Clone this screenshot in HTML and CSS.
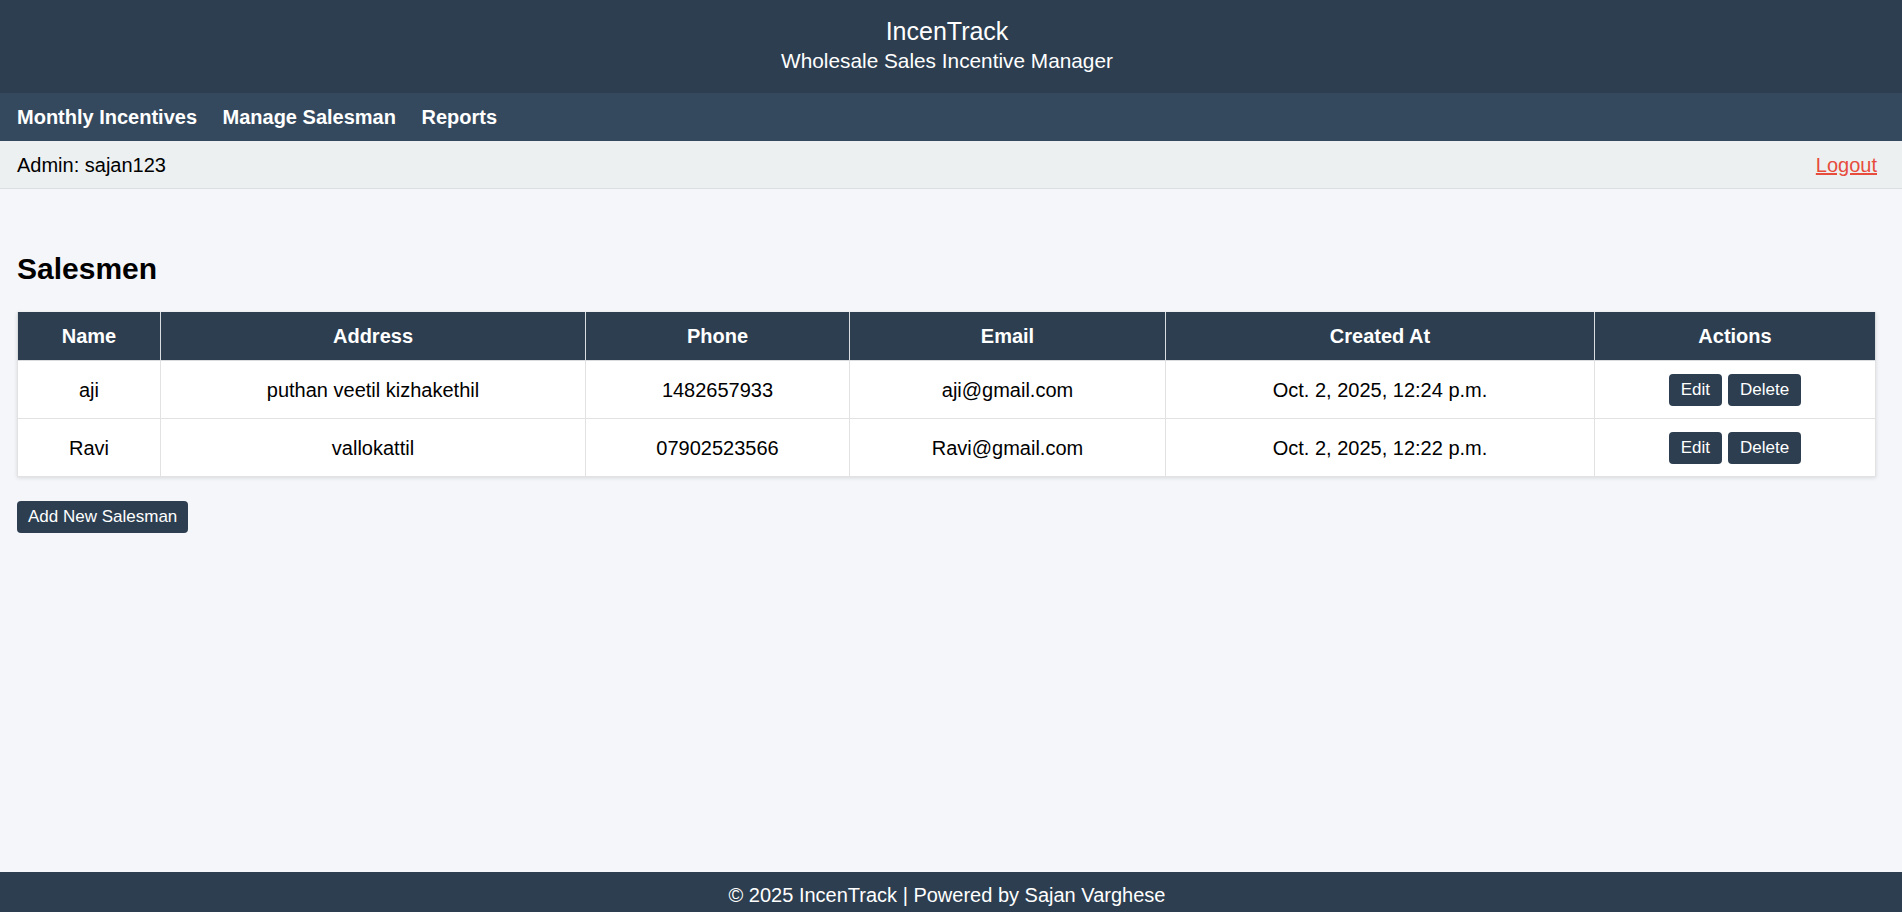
FILE: index.html
```html
<!DOCTYPE html>
<html lang="en">
<head>
<meta charset="utf-8">
<title>IncenTrack - Salesmen</title>
<link rel="stylesheet" href="styles.css">
</head>
<body>
<header class="site-header">
  <div class="brand">IncenTrack</div>
  <div class="tagline">Wholesale Sales Incentive Manager</div>
</header>
<nav class="main-nav">
  <a href="#">Monthly Incentives</a>
  <a href="#">Manage Salesman</a>
  <a href="#">Reports</a>
</nav>
<div class="admin-bar">
  <span class="admin-name">Admin: sajan123</span>
  <a href="#" class="logout">Logout</a>
</div>
<main class="content">
  <h2 class="page-title">Salesmen</h2>
  <table class="data-table">
    <colgroup>
      <col class="c-name">
      <col class="c-address">
      <col class="c-phone">
      <col class="c-email">
      <col class="c-created">
      <col class="c-actions">
    </colgroup>
    <thead>
      <tr>
        <th>Name</th>
        <th>Address</th>
        <th>Phone</th>
        <th>Email</th>
        <th>Created At</th>
        <th>Actions</th>
      </tr>
    </thead>
    <tbody>
      <tr>
        <td>aji</td>
        <td>puthan veetil kizhakethil</td>
        <td>1482657933</td>
        <td>aji@gmail.com</td>
        <td>Oct. 2, 2025, 12:24 p.m.</td>
        <td><div class="actions"><button class="btn-sm">Edit</button><button class="btn-sm">Delete</button></div></td>
      </tr>
      <tr>
        <td>Ravi</td>
        <td>vallokattil</td>
        <td>07902523566</td>
        <td>Ravi@gmail.com</td>
        <td>Oct. 2, 2025, 12:22 p.m.</td>
        <td><div class="actions"><button class="btn-sm">Edit</button><button class="btn-sm">Delete</button></div></td>
      </tr>
    </tbody>
  </table>
  <button class="btn-add">Add New Salesman</button>
</main>
<footer class="site-footer">© 2025 IncenTrack | Powered by Sajan Varghese</footer>
</body>
</html>
```
FILE: styles.css
```css
* { box-sizing: border-box; }

body {
  margin: 0;
  min-height: 100vh;
  display: flex;
  flex-direction: column;
  font-family: "Liberation Sans", Arial, sans-serif;
  background: #f4f6f9;
  color: #000;
}

.site-header {
  background: #2c3e50;
  color: #fff;
  text-align: center;
  padding: 17px 8px 20px 0;
}
.brand {
  font-size: 25px;
  line-height: 29px;
  margin-bottom: 3px;
}
.tagline {
  font-size: 20.8px;
  line-height: 24px;
}

.main-nav {
  background: #34495e;
  display: flex;
  gap: 25.5px;
  padding: 12px 17px 12px;
}
.main-nav a {
  color: #fff;
  text-decoration: none;
  font-weight: bold;
  font-size: 20px;
  line-height: 24px;
}

.admin-bar {
  background: #ecf0f1;
  border-bottom: 1px solid #dcdfe1;
  display: flex;
  justify-content: space-between;
  padding: 12px 25px 11px 17px;
  font-size: 20px;
  line-height: 24px;
}
.logout {
  color: #e74c3c;
  text-decoration: underline;
}

.content {
  flex: 1;
  padding: 62px 26px 0 17px;
}
.page-title {
  margin: 0 0 25px;
  font-size: 30px;
  line-height: 36px;
  font-weight: bold;
}

.data-table {
  width: 100%;
  table-layout: fixed;
  border-collapse: collapse;
  background: #fff;
  box-shadow: 0 1px 4px rgba(0, 0, 0, 0.12);
  margin-bottom: 24px;
  font-size: 20px;
  line-height: 24px;
}
.c-name { width: 143px; }
.c-address { width: 425px; }
.c-phone { width: 264px; }
.c-email { width: 316px; }
.c-created { width: 429px; }

.data-table th {
  background: #2c3e50;
  color: #fff;
  font-weight: bold;
  padding: 12px;
  border: 1px solid #d9dde0;
  border-top: none;
  text-align: center;
}
.data-table td {
  padding: 12px;
  border: 1px solid #e2e2e2;
  text-align: center;
  vertical-align: middle;
}
.data-table tbody tr { height: 58px; }

.actions {
  display: flex;
  justify-content: center;
  gap: 6px;
}
.btn-sm {
  background: #2c3e50;
  color: #fff;
  border: none;
  border-radius: 4px;
  font-family: "Liberation Sans", Arial, sans-serif;
  font-size: 17px;
  line-height: 20px;
  padding: 6px 12px;
  cursor: pointer;
}

.btn-add {
  background: #2c3e50;
  color: #fff;
  border: none;
  border-radius: 4px;
  font-family: "Liberation Sans", Arial, sans-serif;
  font-size: 17px;
  line-height: 20px;
  padding: 6px 11px;
  cursor: pointer;
}

.site-footer {
  background: #2c3e50;
  color: #fff;
  text-align: center;
  font-size: 20px;
  line-height: 24px;
  padding: 11px 8px 5px 0;
}
```
